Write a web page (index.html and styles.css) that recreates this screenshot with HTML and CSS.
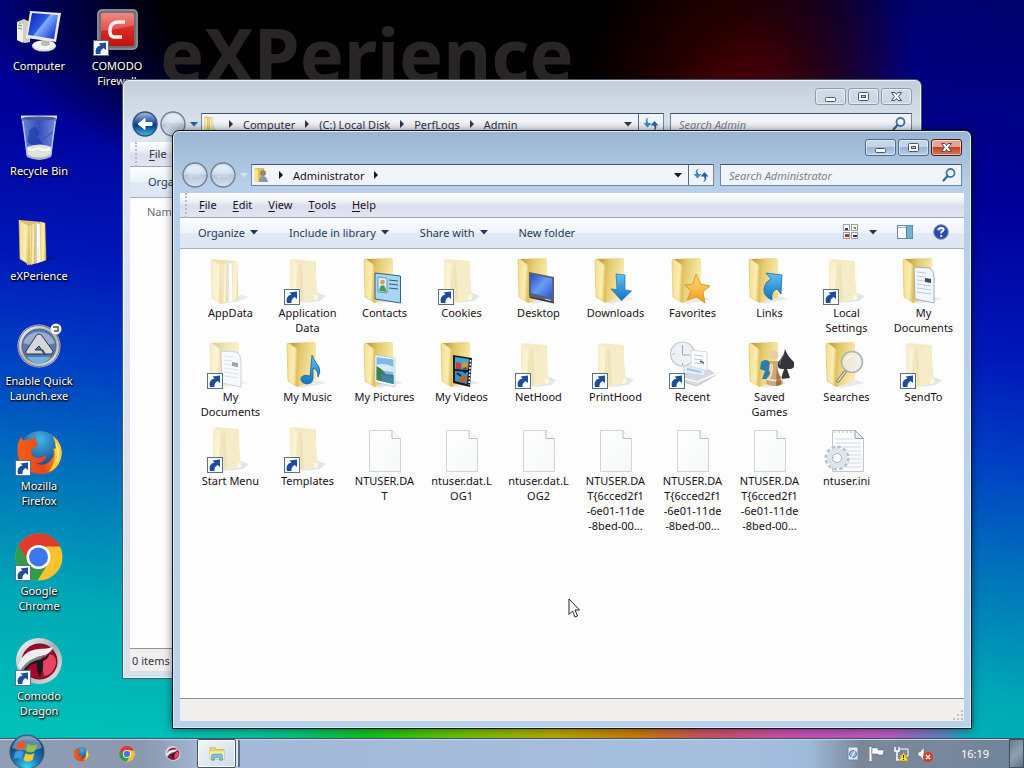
FILE: index.html
```html
<!DOCTYPE html>
<html lang="en">
<head>
    <meta charset="UTF-8">
    <meta name="viewport" content="width=device-width, initial-scale=1.0">
    <title>Administrator</title>
    <link rel="stylesheet" href="styles.css">
</head>
<body>
    <!-- Shared icon shapes -->
    <svg class="sprite" aria-hidden="true">
        <defs>
            <linearGradient id="g-cover" x1="0" y1="0" x2="1" y2="0.2"><stop offset="0" stop-color="#f3dc8e"/><stop offset="0.7" stop-color="#fbeeb2"/><stop offset="1" stop-color="#e0c05c"/></linearGradient>
            <linearGradient id="g-back" x1="0" y1="0" x2="1" y2="0.3"><stop offset="0" stop-color="#b8923a"/><stop offset="0.45" stop-color="#e3c96c"/><stop offset="1" stop-color="#f8eaad"/></linearGradient>
            <linearGradient id="g-blue" x1="0" y1="0" x2="0" y2="1"><stop offset="0" stop-color="#5fc3f2"/><stop offset="1" stop-color="#1272c4"/></linearGradient>
            <linearGradient id="g-screen" x1="0" y1="0" x2="1" y2="1"><stop offset="0" stop-color="#2450c8"/><stop offset="0.5" stop-color="#6a9cf4"/><stop offset="1" stop-color="#2a55cc"/></linearGradient>
            <linearGradient id="g-monitor" x1="0" y1="0" x2="1" y2="0.7"><stop offset="0" stop-color="#0a1fa8"/><stop offset="0.5" stop-color="#2c58e6"/><stop offset="0.55" stop-color="#7fb0ff"/><stop offset="1" stop-color="#1c3fd0"/></linearGradient>
            <linearGradient id="g-star" x1="0" y1="0" x2="0" y2="1"><stop offset="0" stop-color="#ffe27a"/><stop offset="1" stop-color="#f39a1c"/></linearGradient>
            <linearGradient id="g-page" x1="0" y1="0" x2="1" y2="1"><stop offset="0" stop-color="#ffffff"/><stop offset="1" stop-color="#f6f7f8"/></linearGradient>
            <linearGradient id="g-metal" x1="0" y1="0" x2="1" y2="1"><stop offset="0" stop-color="#ffffff"/><stop offset="0.5" stop-color="#a9adb3"/><stop offset="1" stop-color="#e8e8e8"/></linearGradient>
            <linearGradient id="g-red" x1="0" y1="0" x2="0" y2="1"><stop offset="0" stop-color="#ef6a62"/><stop offset="0.5" stop-color="#d82a22"/><stop offset="1" stop-color="#c2120e"/></linearGradient>
            <linearGradient id="g-bin" x1="0" y1="0" x2="1" y2="0"><stop offset="0" stop-color="#7f9de0"/><stop offset="0.5" stop-color="#3c5cc4"/><stop offset="1" stop-color="#8fa9e6"/></linearGradient>
            <radialGradient id="g-globe" cx="0.5" cy="0.2" r="0.8"><stop offset="0" stop-color="#3fb6e8"/><stop offset="1" stop-color="#0c2f78"/></radialGradient>
            <linearGradient id="g-fox" x1="0" y1="0" x2="1" y2="0"><stop offset="0" stop-color="#f0601c"/><stop offset="0.6" stop-color="#e8461a"/><stop offset="1" stop-color="#f7a01e"/></linearGradient>
            <radialGradient id="g-orb" cx="0.5" cy="0.95" r="0.95"><stop offset="0" stop-color="#35d6f6"/><stop offset="0.4" stop-color="#1878b4"/><stop offset="0.8" stop-color="#144476"/><stop offset="1" stop-color="#6f93b4"/></radialGradient>
            <linearGradient id="g-nav" x1="0" y1="0" x2="0" y2="1"><stop offset="0" stop-color="#dbe5f1"/><stop offset="0.5" stop-color="#c8d7e8"/><stop offset="0.52" stop-color="#b6c6d9"/><stop offset="1" stop-color="#d8e3ef"/></linearGradient>
            <linearGradient id="g-navblue" x1="0" y1="0" x2="0" y2="1"><stop offset="0" stop-color="#a9c2e4"/><stop offset="0.45" stop-color="#1f4fa6"/><stop offset="0.55" stop-color="#0d3587"/><stop offset="1" stop-color="#35c4f4"/></linearGradient>
        </defs>

        <symbol id="folder" viewBox="0 0 48 48">
            <path d="M14 44L33 39L42 42L18 47z" fill="#000" opacity="0.08"/>
            <path d="M5 2L30 1Q32 1 32 3L32 39L14 46z" fill="url(#g-back)"/>
            <path d="M5 2L13 8Q14 9 14 11L14 46L4 40L3 4Q3 2 5 2z" fill="url(#g-cover)" stroke="#dcbf62" stroke-width="0.6"/>
        </symbol>
        <symbol id="folder-plain" viewBox="0 0 48 48">
            <path d="M20 46L34 36L42 39L36 44z" fill="#000" opacity="0.18"/>
            <path d="M8 2L30 4Q32 4 32 6L32 42L17 46L14 44z" fill="#ecd88c"/>
            <path d="M6 2L14 8L15 45L6 41z" fill="url(#g-cover)"/>
            <path d="M15 9L28 4L31 8L34 40Q33 43 28 43L17 45z" fill="#f0dd94"/>
            <path d="M15 9L18 8L20 44L17 45z" fill="#d9bc62" opacity="0.6"/>
            <path d="M31 38l3 0v4l-4 1z" fill="#fff8d8"/>
        </symbol>
        <symbol id="folder-full" viewBox="0 0 48 48">
            <path d="M18 46L34 38L42 40L30 45z" fill="#000" opacity="0.15"/>
            <path d="M4 2L28 4L31 30L31 42L12 47z" fill="#e0c468"/>
            <path d="M14 8L19 6L19 46L14 46z" fill="#ede0a8"/>
            <path d="M19 5L24 5L24 45L18 46z" fill="#cfd1d6"/>
            <path d="M22 6L26 6L26 44L22 45z" fill="#ffffff"/>
            <path d="M25 4L30 5L31 42L26 44z" fill="url(#g-cover)" stroke="#cfae52" stroke-width="0.5"/>
            <path d="M17 6L20 5L20 45L16 47z" fill="url(#g-cover)" stroke="#cfae52" stroke-width="0.5"/>
            <path d="M4 2L14 8L15 47L5 41z" fill="url(#g-cover)" stroke="#dcbf62" stroke-width="0.6"/>
            <path d="M22 45v-15q0-2 2-2v14z" fill="#fdf4c8"/>
        </symbol>
        <symbol id="shortcut" viewBox="0 0 48 48">
            <rect x="0.500" y="32.500" width="15" height="15" fill="#fff" stroke="#56708f"/>
            <path d="M3 46Q1 39 7.500 37.500L5.500 35.500L13 34.500L13 42L10.500 40Q7 42 7.500 46z" fill="#1c4e9c"/>
        </symbol>
        <symbol id="page" viewBox="0 0 48 48">
            <path d="M8.500 5.500H31L39.500 14V46.500H8.500z" fill="url(#g-page)" stroke="#d2d4d6"/>
            <path d="M31 5.500V13.500H39.500" fill="#f8f8f8" stroke="#bcbfc2"/>
        </symbol>
        <symbol id="paper" viewBox="0 0 48 48">
            <path d="M14 10L30 11Q34 14 34 20L34 46L15 42z" fill="#f3f6fb" stroke="#8e9db3" stroke-width="0.8"/>
            <path d="M17 15l9 1M17 19l8 1M17 23l14 2M17 27l14 2M17 31l14 2M17 35l14 2" stroke="#b3bfd0" stroke-width="0.8"/>
            <path d="M25 21l6 1v4l-6-1z" fill="#33506f"/>
        </symbol>

        <symbol id="contacts" viewBox="0 0 48 48">
            <path d="M14 16L39.500 19V46L14 42z" fill="#a9d6ef" stroke="#2d6594"/>
            <path d="M17 20L26 21V36L17 35z" fill="#d6ecf6" stroke="#46759c" stroke-width="0.7"/>
            <circle cx="21.500" cy="25" r="2.300" fill="#d79a61"/><path d="M18 34q1-6 3.500-6t4 7z" fill="#4d9b4c"/>
            <path d="M28 23l9 1M28 27l9 1M28 31l9 1" stroke="#2c5e8c"/>
        </symbol>
        <symbol id="desktop-mini" viewBox="0 0 48 48">
            <path d="M14 15L39 20V46L14 39z" fill="#5a6272"/>
            <path d="M16 17L37 21.500V41L16 36z" fill="url(#g-screen)"/>
            <path d="M14 39L39 45V46.500L15 41z" fill="#2e3744"/><path d="M30 42l6 1.500" stroke="#c7d2e2"/>
        </symbol>
        <symbol id="down" viewBox="0 0 48 48">
            <path d="M24 17L33 18L33 33L39.500 34L29.500 43.500L19 32L25 32.500z" fill="url(#g-blue)" stroke="#1c6fb0" stroke-width="0.7"/>
        </symbol>
        <symbol id="star" viewBox="0 0 48 48">
            <path d="M27 17L31.500 27L41 29L34 35L36 46L27.500 40L18 43L22 34L16 28L24 27z" fill="url(#g-star)" stroke="#d98a1a" stroke-width="0.8"/>
        </symbol>
        <symbol id="link" viewBox="0 0 48 48">
            <path d="M20 16L36 18L35 37L31 32Q25 34 26 43Q17 39 18 32Q19 25 25 22z" fill="url(#g-blue)" stroke="#155c96" stroke-width="0.7"/>
            <path d="M29 34q-4 3-1 8q5-1 4-5z" fill="#f1d86a"/>
        </symbol>
        <symbol id="note" viewBox="0 0 48 48">
            <path d="M28 14Q30 20 35 26Q37 31 34 36Q34 29 29 27L29 37Q29 43 22 43Q16 41 17 37Q19 33 26 35z" fill="url(#g-blue)" stroke="#1a5fa0" stroke-width="0.8"/>
        </symbol>
        <symbol id="photo" viewBox="0 0 48 48">
            <path d="M14 14L34 17V46L14 41z" fill="#f6fafc" stroke="#a9b8c4" stroke-width="0.6"/>
            <path d="M15.500 16L32.500 18.500V43L15.500 39z" fill="#7fb9e6"/>
            <path d="M15.500 24q8-3 17 2v5l-17-2z" fill="#d8ecf8"/>
            <path d="M15.500 25q6 3 9 8l8 1v9l-17-4z" fill="#3e7f4e"/><path d="M19 33l13.500 3v7L22 40z" fill="#3f86ae"/>
        </symbol>
        <symbol id="film" viewBox="0 0 48 48">
            <path d="M15 14L34 17L32 46L15 42z" fill="#1b1d22"/>
            <path d="M17 16L31 18L30 29L17 28z" fill="#3da5d8"/><path d="M17 30L30 31L29 43L17 40z" fill="#3096cf"/>
            <path d="M18 21l5 1v6l-5 0z" fill="#d5372c"/><circle cx="27" cy="24" r="3" fill="#d9962e"/><path d="M24 29q3-5 6-1z" fill="#7d3f1f"/><path d="M20 40q4-8 9-4l-1 6z" fill="#c0612c"/><path d="M19 32l4 3M25 30l3 2" stroke="#2a2017" stroke-width="2"/>
            <path d="M32.500 19L31 44" stroke="#fff" stroke-width="1.500" stroke-dasharray="2 1.500"/>
        </symbol>
        <symbol id="recent" viewBox="0 0 48 48">
            <path d="M12 34L40 29L47 34L28 45L14 41z" fill="#d6dade" stroke="#b6bbc1" stroke-width="0.7"/>
            <circle cx="13.500" cy="13" r="12" fill="#eef1f3" stroke="#c3c8cd" stroke-width="1.200"/>
            <path d="M13.500 4v10h8M13.500 22v2M3.500 13h2" fill="none" stroke="#a3a9af"/>
            <path d="M22 9L38 11L38 30L22 28z" fill="#fafcfe" stroke="#c5ced6" stroke-width="0.7"/>
            <path d="M25 14l9 1M25 18l9 1M25 22l10 1" stroke="#bccad6"/><path d="M31 20l4 2" stroke="#567" stroke-width="1.500"/>
            <path d="M15 24L36 29L36 35L15 32z" fill="#e2edf6" stroke="#c0d0dd" stroke-width="0.7"/><path d="M18 28l14 3" stroke="#a5c6e2" stroke-width="2"/>
            <path d="M14 37L28 41L47 33" fill="none" stroke="#fff" stroke-width="1.500"/>
        </symbol>
        <symbol id="games" viewBox="0 0 48 48">
            <path d="M15 21q5-4 9 0l-1 8l3 9h-10l3-8l-5-2z" fill="#2b7fb0"/>
            <path d="M39 8Q42 16 48 21Q50 29 41 28L44 37L35 38L38 28Q30 29 32 21Q38 16 39 8z" fill="#33353b"/><path d="M38 13q-5 7-4 11" fill="none" stroke="#7b7e86"/>
            <circle cx="28" cy="14" r="4.500" fill="#e8cda8"/><path d="M23 20h10l-2 3q0 8 5 14l1 6q-9 4-17 0l1-6q5-6 4-14z" fill="#d0a878"/>
            <path d="M26 23q1 8-3 15M21 38q8 3 15 0" fill="none" stroke="#f8e6cc" stroke-width="1.500"/><path d="M31 22q0 9 4 17v5q-3 1-5 1z" fill="#76502c" opacity="0.6"/>
        </symbol>
        <symbol id="lens" viewBox="0 0 48 48">
            <path d="M22 31L15 40" stroke="#8b7a5a" stroke-width="3.500" stroke-linecap="round"/><path d="M22 31L15 40" stroke="#e1dccf" stroke-width="1.500" stroke-linecap="round"/>
            <circle cx="29" cy="21" r="10.500" fill="#eeeee6" fill-opacity="0.8" stroke="#b0b2b4" stroke-width="1.600"/>
            <path d="M22 20q2-6 9-6q-6 2-9 6z" fill="#fff"/>
        </symbol>
        <symbol id="ini" viewBox="0 0 48 48">
            <path d="M9.500 5.500H32L40.500 14V46.500H9.500z" fill="url(#g-page)" stroke="#c0c6cc"/>
            <path d="M12 5v3M16 5v3M20 5v3M24 5v3M28 5v3" stroke="#b3bac1"/>
            <path d="M12 14h18M12 18h26M12 22h26M12 26h26M12 30h26M12 34h26M12 38h26M12 42h26" stroke="#cfdbe8"/>
            <path d="M32 5.500V13.500H40.500z" fill="#eef1f4" stroke="#9aa3ad"/>
            <circle cx="14" cy="33" r="11" fill="none" stroke="#b4c0cc" stroke-width="3" stroke-dasharray="3.400 2.360"/>
            <circle cx="14" cy="33" r="7.500" fill="none" stroke="#dbe5ee" stroke-width="5.500"/>
            <circle cx="14" cy="33" r="4.500" fill="#fff" stroke="#a3b4c5"/>
        </symbol>

        <symbol id="computer" viewBox="0 0 48 48">
            <path d="M2 14L9 11L15 14V34L10 35L2 32z" fill="#cfcfc6"/><path d="M2 14L8 16V35L2 32z" fill="#f0f0ea"/><path d="M3 17l4 1M3 20l4 1" stroke="#777"/><circle cx="5" cy="15.500" r="1" fill="#7ddc3c"/>
            <ellipse cx="29" cy="38" rx="12" ry="5.500" fill="#d9dad6"/><ellipse cx="29" cy="37" rx="11" ry="4.500" fill="#f4f4f0"/><path d="M27 30h7l1 7q-5 2-9 0z" fill="#b9bab4"/>
            <path d="M15 3L46 5L41 34L11 30z" fill="#e9ebe8"/><path d="M17 5L43 7L39 31L13 27z" fill="url(#g-monitor)"/>
        </symbol>
        <symbol id="bin" viewBox="0 0 48 48">
            <path d="M6 3L42 3L36 43Q24 50 12 43z" fill="url(#g-bin)" fill-opacity="0.85"/>
            <path d="M15 17l5-3l4 6l-3 4l6 6l-6 4l-8-5zM28 26l10-7" fill="#1d3ea6" stroke="#1d3ea6" opacity="0.75"/>
            <path d="M12 34Q24 29 37 34L36 43Q24 49 12.500 43z" fill="#dfe2dd"/><path d="M13 36q5 2 10-1q6 3 12 1" fill="none" stroke="#fff" stroke-width="2"/>
            <path d="M11 41Q24 48 37 41L36 44Q24 50 12 44z" fill="#aeb3bd"/>
            <path d="M6 4H42" stroke="#d7dceb" stroke-width="3"/><ellipse cx="24" cy="5.500" rx="17" ry="2" fill="#49589a"/>
            <path d="M8 8L12 42M40 8L36 42" stroke="#b9c8f2" stroke-width="1.200"/>
        </symbol>
        <symbol id="autoit" viewBox="0 3 48 48">
            <circle cx="24" cy="26" r="21.500" fill="url(#g-metal)"/><circle cx="24" cy="26" r="20.500" fill="none" stroke="#74787e"/>
            <circle cx="24" cy="26" r="17" fill="#5577b2" stroke="#5b6069"/><path d="M8 23a17 17 0 0 1 32 0q-16 6-32 0z" fill="#9aaed2"/><path d="M12 37q12 14 24 0z" fill="#6fb2dc"/>
            <path d="M24 14Q26 14 27 16L38 31Q38 34 36 34H29L24 26L20 30H28L30 34H12Q10 34 11 31L21 16Q22 14 24 14z" fill="#d4d7dc" stroke="#30343b"/>
            <circle cx="41" cy="9" r="5.500" fill="#f1f1f1"/><path d="M38 7h5v4h-4" fill="none" stroke="#555" stroke-width="1.500"/>
        </symbol>
        <symbol id="firefox" viewBox="0 0 48 48">
            <circle cx="25" cy="24" r="21" fill="url(#g-globe)"/>
            <path d="M38 8Q49 17 46 30Q42 45 27 46Q9 46 4 32Q0 18 6 9L9 13Q12 10 17 12L20 7Q20 13 23 16Q21 20 17 21Q15 26 19 29Q24 31 29 28Q33 28 29 32Q26 36 20 35Q28 39 34 34Q41 28 38 20Q42 23 42 18Q42 13 38 8z" fill="url(#g-fox)"/>
            <path d="M38 8Q49 17 46 30Q43 40 34 44Q42 33 39 21Q43 22 38 8z" fill="#f9cf3c"/><path d="M41 16q4 10 1 17" fill="none" stroke="#fff3a0" stroke-width="1.500"/>
        </symbol>
        <symbol id="chrome" viewBox="0 0 48 48">
            <circle cx="24" cy="24" r="23.500" fill="#fbc22d"/>
            <path d="M24 24L3.500 12.500A23.500 23.500 0 0 0 22.500 47.450L34 29z" fill="#2f9c4a"/>
            <path d="M3.500 12.500A23.500 23.500 0 0 1 45.200 13.500L24 13.500L14 29z" fill="#e23a2e"/>
            <circle cx="23.500" cy="24" r="12" fill="#fff"/><circle cx="23.500" cy="24" r="9.500" fill="#3d77ea"/>
        </symbol>
        <symbol id="dragon" viewBox="0 0 48 48">
            <circle cx="24" cy="23" r="23" fill="url(#g-metal)"/><circle cx="24.500" cy="23.500" r="17.500" fill="#a5082a" stroke="#4c1420"/>
            <path d="M27 27l3-10q12-3 11 9q-3 11-12 12z" fill="#e64464"/>
            <path d="M8 32Q12 22 24 22Q31 20 35 14Q33 22 28 23Q29 31 25 39Q21 33 22 25Q14 25 10 35z" fill="#18191c"/>
            <path d="M3 28Q8 12 24 11Q32 11 38 9Q36 15 30 17Q15 20 6 32z" fill="#eceef0"/><path d="M6 31Q15 19 30 17L26 21Q14 23 8 33z" fill="#7d8187"/>
        </symbol>
        <symbol id="comodo" viewBox="0 0 48 48">
            <rect x="4" y="1" width="41" height="41" rx="5" fill="#6d7179"/><rect x="5" y="2" width="39" height="39" rx="4" fill="none" stroke="#9b9fa6"/>
            <rect x="8" y="5" width="33" height="33" rx="2" fill="url(#g-red)"/><path d="M8 7q0-2 2-2h29q2 0 2 2v10q-18 5-33 6z" fill="#fff" opacity="0.2"/>
            <path d="M32 14H26Q18 14 17 21Q16 29 22 29H29" fill="none" stroke="#f6f0ef" stroke-width="3.500"/>
        </symbol>

        <symbol id="nav-off" viewBox="0 0 26 26">
            <circle cx="13" cy="13" r="12" fill="url(#g-nav)" stroke="#707f92" stroke-width="1.400"/><path d="M4 10a9.500 9.500 0 0 1 18 0q-9 4-18 0z" fill="#fff" opacity="0.35"/>
            <path d="M7 14h12M10 16.500l-3-2.500" fill="none" stroke="#eef3f8" opacity="0.6"/>
        </symbol>
        <symbol id="nav-on" viewBox="0 0 26 26">
            <circle cx="13" cy="13" r="12" fill="url(#g-navblue)" stroke="#3a4e70" stroke-width="1.400"/>
            <path d="M6 13L13 7.500V11.500H20V14.500H13V18.500z" fill="#fff" stroke="#fff" stroke-linejoin="round"/>
        </symbol>
        <symbol id="tri-down" viewBox="0 0 8 8"><path d="M0 2H8L4 6.500z" fill="currentColor"/></symbol>
        <symbol id="tri-right" viewBox="0 0 8 8"><path d="M2 0L6 4L2 8z" fill="currentColor"/></symbol>
        <symbol id="refresh" viewBox="0 0 16 16">
            <path d="M6 1Q3 4 5.500 7H8.500L4.500 11.500L0.500 7H3Q1.500 3 6 1z" fill="#3f8cc4"/><path d="M10 15.500Q13 12 10.500 9.500H7.500L11.500 5L15.500 9.500H13Q14.500 13 10 15.500z" fill="#2c5fa8"/>
        </symbol>
        <symbol id="search" viewBox="0 0 16 16"><circle cx="9.500" cy="6" r="4" fill="#fff" stroke="#3c77b4" stroke-width="1.800"/><path d="M6.500 9L2.500 13.500" stroke="#3567a0" stroke-width="2.200" stroke-linecap="round"/></symbol>
        <symbol id="min" viewBox="0 0 12 12"><rect x="0.500" y="6.500" width="10" height="4" rx="1" fill="#fff" stroke="#4b576b"/></symbol>
        <symbol id="max" viewBox="0 0 12 12"><rect x="0.500" y="1.500" width="10" height="8" rx="1" fill="#fff" stroke="#4b576b"/><rect x="3.500" y="4.500" width="4" height="2" fill="#b9c7d9" stroke="#4b576b"/></symbol>
        <symbol id="close" viewBox="0 0 12 12"><path d="M0.500 1.500H4L5.500 3.500L7 1.500H10.500L7.500 5.500L10.500 9.500H7L5.500 7.500L4 9.500H0.500L3.500 5.500z" fill="#fff" stroke="#4b4f60"/></symbol>
        <symbol id="views" viewBox="0 0 16 16">
            <g fill="#fff" stroke="#98a09c"><rect x="0.500" y="0.500" width="6" height="6"/><rect x="8.500" y="0.500" width="6" height="6"/><rect x="0.500" y="8.500" width="6" height="6"/><rect x="8.500" y="8.500" width="6" height="6"/></g>
            <path d="M2 4h3v2H2z" fill="#33415e"/><path d="M10 3h3v2h-2z" fill="#6d9a2d"/><path d="M2 10h4v3H2z" fill="#b53428"/><path d="M10 11h4v2h-4z" fill="#22355c"/>
        </symbol>
        <symbol id="pane" viewBox="0 0 16 16"><rect x="0.500" y="1.500" width="15" height="13" fill="#fff" stroke="#6687aa"/><path d="M1 3.500h14" stroke="#9db6cf"/><rect x="10" y="2" width="5" height="12" fill="#6fb4d2"/><path d="M9.500 2v12" stroke="#4f7faa"/></symbol>
        <symbol id="help" viewBox="0 0 16 16"><circle cx="8" cy="8" r="7.300" fill="#2b49a8" stroke="#7d8db4"/><path d="M3 6a5.500 5.500 0 0 1 10 0q-5 2-10 0z" fill="#8fa7e6" opacity="0.6"/><path d="M5.500 6.200Q5.800 3.800 8.200 3.800Q10.800 4 10.500 6Q10.200 7.300 8.200 8.300V9.600" fill="none" stroke="#fff" stroke-width="1.600"/><circle cx="8.200" cy="12" r="1.100" fill="#fff"/></symbol>
        <symbol id="user-folder" viewBox="0 0 16 16"><path d="M1 1L11 1V14L4 15L1 13z" fill="#e0c250"/><path d="M1 1l4 2v12l-4-2z" fill="#f6e490"/><circle cx="10" cy="6" r="3" fill="#998a72"/><path d="M6 15q0-6 4-6t5 6z" fill="#8d98a4"/></symbol>
        <symbol id="grip" viewBox="0 0 12 12"><path d="M9 1h2v2h-2zM9 5h2v2h-2zM9 9h2v2h-2zM5 5h2v2h-2zM5 9h2v2h-2zM1 9h2v2h-2z" fill="#c2c0c0"/></symbol>

        <symbol id="orb" viewBox="0 0 36 36">
            <circle cx="18" cy="18" r="17" fill="url(#g-orb)" stroke="#34506a"/><path d="M3 14a15.500 15.500 0 0 1 30 0q-14 5-30 0z" fill="#fff" opacity="0.35"/>
            <path d="M9 9q4-3 8 0l-2 7q-4-2-8 0z" fill="#ea5a26"/><path d="M19 10q4 3 9 0l-2 7q-5 3-9 0z" fill="#8fc63f"/><path d="M6.500 18q4-3 8 0l-2 7q-4-2-8 0z" fill="#3b9be6"/><path d="M16.500 19q4 3 9 0l-2 7q-5 3-9 0z" fill="#fcc92c"/>
        </symbol>
        <symbol id="explorer" viewBox="0 0 18 18"><path d="M1 2h6l1 2h9v11H1z" fill="#ecd36c" stroke="#c4a544" stroke-width="0.700"/><path d="M1 6h16v9H1z" fill="#fbeb9f"/><path d="M3 16v-5q0-2 2-2h8q2 0 2 2v5h-3v-3H6v3z" fill="#7cc0ea" stroke="#3f8cc0" stroke-width="0.700"/></symbol>
        <symbol id="tray-doc" viewBox="0 0 16 16"><path d="M3 1h10v13H3z" fill="#e3ecf5" stroke="#6c86a4"/><circle cx="8" cy="8" r="3.500" fill="#9bbbdc" stroke="#4d77a6"/><path d="M6 12l4-7" stroke="#fff"/></symbol>
        <symbol id="tray-flag" viewBox="0 0 16 16"><path d="M1.500 1v14" stroke="#fff" stroke-width="2"/><path d="M3 2h6v2h6l-1 5H9V8H3z" fill="#fff" stroke="#56606e" stroke-width="0.500"/></symbol>
        <symbol id="tray-net" viewBox="0 0 16 16"><path d="M2 1v4h4V1M4 5v9h6" fill="none" stroke="#fff" stroke-width="1.500"/><path d="M7 3h8v7H7" fill="none" stroke="#fff"/><path d="M10.500 6L15.500 15H5.500z" fill="#f8de26" stroke="#9c8410" stroke-width="0.600"/><path d="M10.500 9v3M10.500 13v1" stroke="#222"/></symbol>
        <symbol id="tray-vol" viewBox="0 0 16 16"><path d="M1 6h2l4-5v14l-4-5H1z" fill="#fff" stroke="#56606e" stroke-width="0.600"/><circle cx="11" cy="11" r="5" fill="#e0362c"/><path d="M9 9l4 4M13 9l-4 4" stroke="#fff" stroke-width="1.600"/></symbol>
    </svg>

    <main class="desktop">
        <div class="wallpaper-text">eXPerience</div>

        <nav class="shortcuts" aria-label="Desktop">
            <a href="#"><svg class="icon"><use href="#computer"/></svg>Computer</a>
            <a href="#"><svg class="icon"><use href="#bin"/></svg>Recycle Bin</a>
            <a href="#"><svg class="icon"><use href="#folder-full"/></svg>eXPerience</a>
            <a href="#"><svg class="icon"><use href="#autoit"/></svg>Enable Quick Launch.exe</a>
            <a href="#"><svg class="icon"><use href="#firefox"/><use href="#shortcut"/></svg>Mozilla<br>Firefox</a>
            <a href="#"><svg class="icon"><use href="#chrome"/><use href="#shortcut"/></svg>Google<br>Chrome</a>
            <a href="#"><svg class="icon"><use href="#dragon"/><use href="#shortcut"/></svg>Comodo<br>Dragon</a>
            <a href="#"><svg class="icon"><use href="#comodo"/><use href="#shortcut"/></svg>COMODO<br>Firewall</a>
        </nav>

        <section class="window window-back" aria-label="Admin">
            <div class="title-bar">
                <button class="control" aria-label="Minimize"><svg><use href="#min"/></svg></button>
                <button class="control" aria-label="Maximize"><svg><use href="#max"/></svg></button>
                <button class="control" aria-label="Close"><svg><use href="#close"/></svg></button>
            </div>
            <div class="nav-row">
                <div class="travel">
                    <button aria-label="Back"><svg><use href="#nav-on"/></svg></button>
                    <button aria-label="Forward"><svg><use href="#nav-off"/></svg></button>
                </div>
                <button class="recent-pages" aria-label="Recent pages"><svg class="tri"><use href="#tri-down"/></svg></button>
                <div class="address">
                    <svg class="small-icon" viewBox="0 0 48 48"><use href="#folder-full"/></svg>
                    <svg class="tri"><use href="#tri-right"/></svg>
                    <button>Computer</button><svg class="tri"><use href="#tri-right"/></svg>
                    <button>(C:) Local Disk</button><svg class="tri"><use href="#tri-right"/></svg>
                    <button>PerfLogs</button><svg class="tri"><use href="#tri-right"/></svg>
                    <button>Admin</button>
                    <button class="history" aria-label="Previous locations"><svg class="tri"><use href="#tri-down"/></svg></button>
                    <button class="refresh" aria-label="Refresh"><svg class="small-icon"><use href="#refresh"/></svg></button>
                </div>
                <label class="search-box">
                    <input type="text" placeholder="Search Admin" aria-label="Search Admin">
                    <svg class="small-icon"><use href="#search"/></svg>
                </label>
            </div>
            <div class="client">
                <div class="menu-bar"><button><u>F</u>ile</button></div>
                <div class="tool-bar"><button>Organize <svg class="tri"><use href="#tri-down"/></svg></button></div>
                <div class="list"><span class="column-name">Name</span></div>
                <div class="status-bar">0 items</div>
            </div>
        </section>

        <section class="window window-front" aria-label="Administrator">
            <div class="title-bar">
                <button class="control" aria-label="Minimize"><svg><use href="#min"/></svg></button>
                <button class="control" aria-label="Maximize"><svg><use href="#max"/></svg></button>
                <button class="control control-close" aria-label="Close"><svg><use href="#close"/></svg></button>
            </div>
            <div class="nav-row">
                <div class="travel">
                    <button aria-label="Back"><svg><use href="#nav-off"/></svg></button>
                    <button aria-label="Forward"><svg><use href="#nav-off"/></svg></button>
                </div>
                <button class="recent-pages" aria-label="Recent pages"><svg class="tri"><use href="#tri-down"/></svg></button>
                <div class="address">
                    <svg class="small-icon"><use href="#user-folder"/></svg>
                    <svg class="tri"><use href="#tri-right"/></svg>
                    <button>Administrator</button><svg class="tri"><use href="#tri-right"/></svg>
                    <button class="history" aria-label="Previous locations"><svg class="tri"><use href="#tri-down"/></svg></button>
                    <button class="refresh" aria-label="Refresh"><svg class="small-icon"><use href="#refresh"/></svg></button>
                </div>
                <label class="search-box">
                    <input type="text" placeholder="Search Administrator" aria-label="Search Administrator">
                    <svg class="small-icon"><use href="#search"/></svg>
                </label>
            </div>
            <div class="client">
                <div class="menu-bar">
                    <button><u>F</u>ile</button>
                    <button><u>E</u>dit</button>
                    <button><u>V</u>iew</button>
                    <button><u>T</u>ools</button>
                    <button><u>H</u>elp</button>
                </div>
                <div class="tool-bar">
                    <button>Organize <svg class="tri"><use href="#tri-down"/></svg></button>
                    <button>Include in library <svg class="tri"><use href="#tri-down"/></svg></button>
                    <button>Share with <svg class="tri"><use href="#tri-down"/></svg></button>
                    <button>New folder</button>
                    <div class="tool-icons">
                        <button class="views" aria-label="Change your view"><svg class="small-icon"><use href="#views"/></svg><svg class="tri"><use href="#tri-down"/></svg></button>
                        <button aria-label="Show the preview pane"><svg class="small-icon"><use href="#pane"/></svg></button>
                        <button aria-label="Get help"><svg class="small-icon"><use href="#help"/></svg></button>
                    </div>
                </div>
                <div class="files">
                    <a href="#"><svg class="icon"><use class="hidden-item" href="#folder-full"/></svg>AppData</a>
                    <a href="#"><svg class="icon"><use class="hidden-item" href="#folder-plain"/><use href="#shortcut"/></svg>Application Data</a>
                    <a href="#"><svg class="icon"><use href="#folder"/><use href="#contacts"/></svg>Contacts</a>
                    <a href="#"><svg class="icon"><use class="hidden-item" href="#folder-plain"/><use href="#shortcut"/></svg>Cookies</a>
                    <a href="#"><svg class="icon"><use href="#folder"/><use href="#desktop-mini"/></svg>Desktop</a>
                    <a href="#"><svg class="icon"><use href="#folder"/><use href="#down"/></svg>Downloads</a>
                    <a href="#"><svg class="icon"><use href="#folder"/><use href="#star"/></svg>Favorites</a>
                    <a href="#"><svg class="icon"><use href="#folder"/><use href="#link"/></svg>Links</a>
                    <a href="#"><svg class="icon"><use class="hidden-item" href="#folder-plain"/><use href="#shortcut"/></svg>Local<br>Settings</a>
                    <a href="#"><svg class="icon"><use href="#folder"/><use href="#paper"/></svg>My<br>Documents</a>

                    <a href="#"><svg class="icon"><g class="hidden-item"><use href="#folder"/><use href="#paper"/></g><use href="#shortcut"/></svg>My<br>Documents</a>
                    <a href="#"><svg class="icon"><use href="#folder"/><use href="#note"/></svg>My Music</a>
                    <a href="#"><svg class="icon"><use href="#folder"/><use href="#photo"/></svg>My Pictures</a>
                    <a href="#"><svg class="icon"><use href="#folder"/><use href="#film"/></svg>My Videos</a>
                    <a href="#"><svg class="icon"><use class="hidden-item" href="#folder-plain"/><use href="#shortcut"/></svg>NetHood</a>
                    <a href="#"><svg class="icon"><use class="hidden-item" href="#folder-plain"/><use href="#shortcut"/></svg>PrintHood</a>
                    <a href="#"><svg class="icon"><use href="#recent"/><use href="#shortcut"/></svg>Recent</a>
                    <a href="#"><svg class="icon"><use href="#folder"/><use href="#games"/></svg>Saved<br>Games</a>
                    <a href="#"><svg class="icon"><use href="#folder"/><use href="#lens"/></svg>Searches</a>
                    <a href="#"><svg class="icon"><use class="hidden-item" href="#folder-plain"/><use href="#shortcut"/></svg>SendTo</a>

                    <a href="#"><svg class="icon"><use class="hidden-item" href="#folder-plain"/><use href="#shortcut"/></svg>Start Menu</a>
                    <a href="#"><svg class="icon"><use class="hidden-item" href="#folder-plain"/><use href="#shortcut"/></svg>Templates</a>
                    <a href="#"><svg class="icon"><use href="#page"/></svg>NTUSER.DA<br>T</a>
                    <a href="#"><svg class="icon"><use href="#page"/></svg>ntuser.dat.L<br>OG1</a>
                    <a href="#"><svg class="icon"><use href="#page"/></svg>ntuser.dat.L<br>OG2</a>
                    <a href="#"><svg class="icon"><use href="#page"/></svg>NTUSER.DA<br>T{6cced2f1<br>-6e01-11de<br>-8bed-00...</a>
                    <a href="#"><svg class="icon"><use href="#page"/></svg>NTUSER.DA<br>T{6cced2f1<br>-6e01-11de<br>-8bed-00...</a>
                    <a href="#"><svg class="icon"><use href="#page"/></svg>NTUSER.DA<br>T{6cced2f1<br>-6e01-11de<br>-8bed-00...</a>
                    <a href="#"><svg class="icon"><use href="#ini"/></svg>ntuser.ini</a>
                </div>
                <div class="status-bar"><svg class="grip"><use href="#grip"/></svg></div>
            </div>
        </section>

        <svg class="cursor" viewBox="0 0 12 20"><path d="M1 1V16.500L4.500 13L7 19L9.500 18L7 12H11.500z" fill="#fff" stroke="#222"/></svg>
    </main>

    <footer class="taskbar">
        <button class="start" aria-label="Start"><svg><use href="#orb"/></svg></button>
        <button class="task" aria-label="Mozilla Firefox"><svg class="small-icon" viewBox="0 0 48 48"><use href="#firefox"/></svg></button>
        <button class="task" aria-label="Google Chrome"><svg class="small-icon" viewBox="0 0 48 48"><use href="#chrome"/></svg></button>
        <button class="task" aria-label="Comodo Dragon"><svg class="small-icon" viewBox="0 0 48 48"><use href="#dragon"/></svg></button>
        <button class="task task-open" aria-label="Windows Explorer"><svg class="small-icon"><use href="#explorer"/></svg></button>
        <div class="tray">
            <svg class="small-icon"><use href="#tray-doc"/></svg>
            <svg class="small-icon"><use href="#tray-flag"/></svg>
            <svg class="small-icon"><use href="#tray-net"/></svg>
            <svg class="small-icon"><use href="#tray-vol"/></svg>
            <time>16:19</time>
        </div>
        <button class="show-desktop" aria-label="Show desktop"></button>
    </footer>
</body>
</html>
```
FILE: styles.css
```css
* {
    box-sizing: border-box;
}

body {
    margin: 0;
    min-height: 100vh;
    display: flex;
    flex-direction: column;
    font-family: "Noto Sans", "Open Sans", sans-serif;
    font-size: 11px;
    line-height: 15px;
    color: #1a1020;
    overflow: hidden;
    background:
        linear-gradient(90deg, transparent 17%, #00c090 27%, #10bf20 36%, #6abf00 45%, #b4a800 54%, #c47a08 62%, #c85060 69%, #c350b4 78%, #b25cbc 87%, #5a80b8 92%, transparent 95%) bottom / 100% 44px no-repeat,
        radial-gradient(ellipse 17% 30% at 73% 17%, #600000, rgba(50, 0, 0, 0.7) 50%, transparent),
        radial-gradient(ellipse 46% 28% at 44% 0, #000 60%, transparent),
        linear-gradient(186deg, #00006c 0%, #00009a 24%, #0018b8 41%, #0040c4 53%, #0078ba 67%, #00a8b6 80%, #00c0b8 95%);
}

button,
input {
    font: inherit;
    color: inherit;
    background: none;
    border: 0;
    padding: 0;
    margin: 0;
}

button {
    display: inline-flex;
    align-items: center;
    justify-content: center;
    white-space: nowrap;
}

a {
    color: inherit;
    text-decoration: none;
}

.sprite {
    position: absolute;
    width: 0;
    height: 0;
}

.icon {
    display: block;
    width: 48px;
    height: 48px;
    margin: 0 auto;
}

.small-icon {
    width: 16px;
    height: 16px;
    flex: none;
}

.tri {
    width: 8px;
    height: 8px;
    flex: none;
}

.hidden-item {
    opacity: 0.5;
}

/* Desktop */
.desktop {
    position: relative;
    flex: 1;
}

.wallpaper-text {
    position: absolute;
    left: 160px;
    top: 1px;
    font-size: 74px;
    line-height: 106px;
    font-weight: bold;
    color: #292525;
}

.shortcuts {
    position: absolute;
    top: 0;
    bottom: 0;
    left: 0;
    display: grid;
    grid-auto-flow: column;
    grid-template-rows: repeat(auto-fill, 105px);
    grid-auto-columns: 78px;
    text-align: center;
    color: #fff;
    text-shadow: 0 1px 2px #000, 1px 1px 2px #000;
}

.shortcuts a {
    padding-top: 8px;
}

.shortcuts .icon {
    margin-bottom: 2px;
}

/* Windows */
.window {
    position: absolute;
    display: flex;
    flex-direction: column;
    padding: 8px 7px 7px;
    border: 1px solid #10141c;
    border-radius: 7px 7px 0 0;
}

.window-back {
    top: 79px;
    right: 102px;
    bottom: 59px;
    left: 122px;
    background: linear-gradient(180deg, #c3ceda, #dbe5ef 50px, #d6e1ec);
    border-color: #4c5564;
    box-shadow: inset 0 0 0 1px #eef3f8;
    color: #33333d;
}

.window-front {
    top: 130px;
    right: 52px;
    bottom: 9px;
    left: 172px;
    background: linear-gradient(180deg, #9ab5d3, #b7cfe8 55px, #bad3ec);
    box-shadow: inset 0 0 0 1px #dceaf6, 0 0 8px rgba(0, 0, 0, 0.5);
}

.title-bar {
    display: flex;
    justify-content: flex-end;
    gap: 2px;
    padding-right: 2px;
}

.control {
    width: 31px;
    height: 17px;
    border: 1px solid #8c9bb0;
    border-radius: 3px;
    background: linear-gradient(#d2dce8, #cbd6e3);
    box-shadow: inset 0 0 0 1px rgba(255, 255, 255, 0.5);
}

.control svg {
    width: 12px;
    height: 12px;
}

.window-front .control {
    border-color: #52688a;
    background: linear-gradient(#c3d5ea 45%, #9cb4d2 50%, #b8cfe8);
}

.window-front .control-close {
    border-color: #4a1c20;
    background: linear-gradient(#e6a491 45%, #c4452c 50%, #d8765a);
}

.nav-row {
    display: flex;
    align-items: center;
    padding: 6px 2px 5px;
}

.travel {
    display: flex;
    gap: 2px;
}

.travel svg {
    width: 26px;
    height: 26px;
}

.recent-pages {
    width: 15px;
    color: #1c62a0;
}

.window-front .recent-pages {
    color: #d5e4f2;
}

.address,
.search-box {
    display: flex;
    align-items: center;
    height: 22px;
    background: #f1f5fb;
    border: 1px solid #6d87a6;
    border-top-color: #3c5472;
}

.address {
    flex: 1;
    gap: 8px;
    padding-left: 1px;
}

.history {
    margin-left: auto;
}

.refresh {
    align-self: stretch;
    width: 25px;
    margin-left: -2px;
    border-left: 1px solid #4f6c90;
}

.search-box {
    flex: 0 1 242px;
    min-width: 0;
    margin-left: 6px;
    padding: 0 4px 0 8px;
}

.search-box input {
    flex: 1;
    min-width: 0;
    font-style: italic;
}

.search-box input::placeholder {
    color: #7d828c;
    opacity: 1;
}

.client {
    flex: 1;
    min-height: 0;
    display: flex;
    flex-direction: column;
    background: linear-gradient(#fff, #f0f1f8 8px, #dadeed 13px, #e2e5f1 24px, #9ba6b8 24px, #9ba6b8 25px, #fdfdfd 25px);
}

.menu-bar {
    display: flex;
    gap: 16px;
    height: 25px;
    padding: 0 0 2px 12px;
    margin-left: 5px;
    border-left: 2px dotted #b7bccb;
}

.menu-bar u {
    text-underline-offset: 2px;
}

.tool-bar {
    display: flex;
    align-items: center;
    gap: 31px;
    height: 31px;
    padding: 0 15px 2px 18px;
    color: #1e395b;
    background: linear-gradient(#fbfdff, #edf3fb 50%, #e0e9f5 52%, #dde7f3);
    border-bottom: 1px solid #a3b2c6;
}

.tool-bar > button {
    gap: 5px;
}

.tool-icons {
    display: flex;
    align-items: center;
    gap: 20px;
    margin-left: auto;
}

.views {
    gap: 10px;
}

.files {
    flex: 1;
    min-height: 0;
    display: grid;
    grid-template-columns: repeat(auto-fill, 77px);
    grid-auto-rows: minmax(84px, max-content);
    align-content: start;
    padding: 2px 0 0 12px;
    text-align: center;
}

.files a {
    padding-top: 6px;
}

.list {
    flex: 1;
    padding: 6px 17px;
}

.column-name {
    color: #6a6e78;
}

.status-bar {
    display: flex;
    align-items: center;
    height: 23px;
    padding-left: 2px;
    background: #f1efee;
    border-top: 1px solid #8f9296;
}

.grip {
    width: 12px;
    height: 12px;
    margin-left: auto;
    align-self: flex-end;
}

.cursor {
    position: absolute;
    left: 568px;
    top: 598px;
    width: 12px;
    height: 20px;
}

/* Taskbar */
.taskbar {
    position: relative;
    display: flex;
    height: 30px;
    border-top: 1px solid #3c5068;
    box-shadow: inset 0 1px 0 #c9d7e6;
    background: linear-gradient(90deg, #8f9db5, #8b98b0 14%, #a4b8d6 20%, #a6bfdf 70%, #9fbbdb 79%, #7b8799 84%, #78879b 93%, #6f8398);
}

.start {
    width: 58px;
    align-items: flex-start;
    justify-content: flex-start;
    padding-left: 9px;
}

.start svg {
    width: 36px;
    height: 36px;
    flex: none;
    margin-top: -5px;
}

.task {
    width: 46px;
}

.task-open {
    width: 39px;
    margin-left: 1px;
    border: 1px solid #43546c;
    border-radius: 2px;
    background: linear-gradient(135deg, #f2f6f8, #cfdae8);
    box-shadow: inset 0 0 0 1px #fff, 3px 0 0 -1px #dbe5f0, 5px 0 0 -1px #5b6c84;
}

.tray {
    display: flex;
    align-items: center;
    gap: 8px;
    margin-left: auto;
    padding-right: 20px;
    color: #fff;
}

.tray time {
    margin-left: 20px;
}

.show-desktop {
    width: 15px;
    border: 1px solid #414f60;
    background: linear-gradient(135deg, #66788c, #91a1b2 50%, #5f7186);
}
```
